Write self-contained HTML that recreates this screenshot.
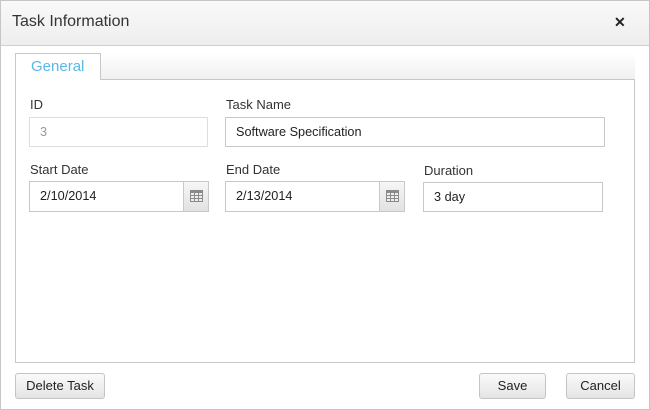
<!DOCTYPE html><html><head><style>
body{margin:0;width:650px;height:410px;font-family:"Segoe UI","Liberation Sans",sans-serif;background:#fff;position:relative;overflow:hidden}
.a{position:absolute;box-sizing:border-box}
.lbl{font-size:13px;color:#333}
.in{border:1px solid #c8c8c8;font-size:12.7px;color:#222;padding-left:10px;line-height:29px;background:#fff}
.cal{border-left:1px solid #c8c8c8;background:linear-gradient(#f6f6f6,#e2e2e2);}
.btn{border:1px solid #c4c4c4;border-radius:3px;background:linear-gradient(#fafafa,#e4e4e4);font-size:13px;color:#222;text-align:center;line-height:24px}
</style></head><body>
<div class="a" style="left:0;top:0;width:650px;height:410px;border:1px solid #c6c6c6"></div>
<div class="a" style="left:1px;top:1px;width:648px;height:45px;background:linear-gradient(#f9f9f9,#eeeeee);border-bottom:1px solid #cfcfcf"></div>
<div class="a" style="left:12px;top:13px;font-size:16px;color:#333">Task Information</div>
<div class="a" style="left:614px;top:14px;font-size:14px;font-weight:bold;color:#222">✕</div>
<div class="a" style="left:15px;top:53px;width:620px;height:27px;background:linear-gradient(#fff,#f0f0f0);border-bottom:1px solid #c8c8c8"></div>
<div class="a" style="left:15px;top:53px;width:86px;height:27px;background:#fff;border:1px solid #c8c8c8;border-bottom:none;font-size:15px;color:#5bb8e6;padding:4px 0 0 15px">General</div>
<div class="a" style="left:15px;top:79px;width:620px;height:284px;border:1px solid #c8c8c8;border-top:none"></div>
<div class="a lbl" style="left:30px;top:97px">ID</div>
<div class="a lbl" style="left:226px;top:97px">Task Name</div>
<div class="a in" style="left:29px;top:117px;width:179px;height:30px;color:#999;border-color:#ddd">3</div>
<div class="a in" style="left:225px;top:117px;width:380px;height:30px">Software Specification</div>
<div class="a lbl" style="left:30px;top:162px">Start Date</div>
<div class="a lbl" style="left:226px;top:162px">End Date</div>
<div class="a lbl" style="left:424px;top:163px">Duration</div>
<div class="a in" style="left:29px;top:181px;width:180px;height:31px">2/10/2014<div class="a cal" style="right:0;top:0;width:25px;height:29px"><svg width="25" height="29"><rect x="6" y="8" width="13" height="12" fill="#8a8a8a"/><g fill="#eee"><rect x="7" y="11" width="3" height="2"/><rect x="11" y="11" width="3" height="2"/><rect x="15" y="11" width="3" height="2"/><rect x="7" y="14" width="3" height="2"/><rect x="11" y="14" width="3" height="2"/><rect x="15" y="14" width="3" height="2"/><rect x="7" y="17" width="3" height="2"/><rect x="11" y="17" width="3" height="2"/><rect x="15" y="17" width="3" height="2"/></g></svg></div></div>
<div class="a in" style="left:225px;top:181px;width:180px;height:31px">2/13/2014<div class="a cal" style="right:0;top:0;width:25px;height:29px"><svg width="25" height="29"><rect x="6" y="8" width="13" height="12" fill="#8a8a8a"/><g fill="#eee"><rect x="7" y="11" width="3" height="2"/><rect x="11" y="11" width="3" height="2"/><rect x="15" y="11" width="3" height="2"/><rect x="7" y="14" width="3" height="2"/><rect x="11" y="14" width="3" height="2"/><rect x="15" y="14" width="3" height="2"/><rect x="7" y="17" width="3" height="2"/><rect x="11" y="17" width="3" height="2"/><rect x="15" y="17" width="3" height="2"/></g></svg></div></div>
<div class="a in" style="left:423px;top:182px;width:180px;height:30px">3 day</div>
<div class="a btn" style="left:15px;top:373px;width:90px;height:26px">Delete Task</div>
<div class="a btn" style="left:479px;top:373px;width:67px;height:26px">Save</div>
<div class="a btn" style="left:566px;top:373px;width:69px;height:26px">Cancel</div>
</body></html>
